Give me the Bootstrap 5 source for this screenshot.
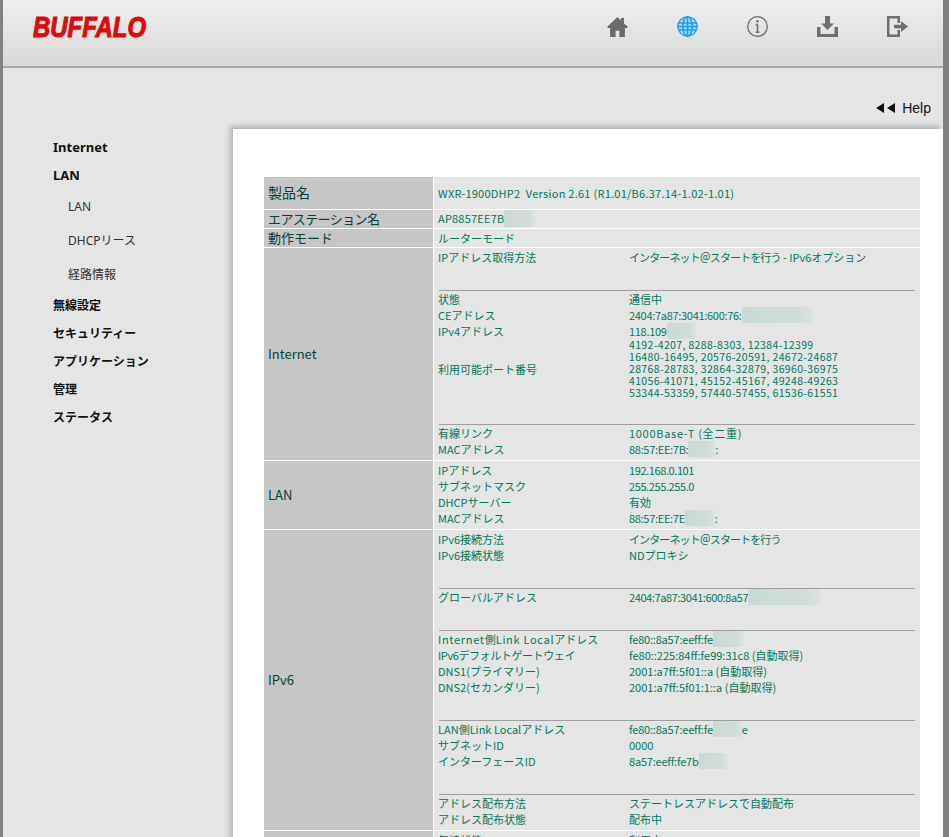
<!DOCTYPE html>
<html lang="ja"><head><meta charset="utf-8">
<link rel="stylesheet" href="https://cdn.jsdelivr.net/npm/bootstrap@5.3.0/dist/css/bootstrap.min.css">
<style>
html,body{height:837px;overflow:hidden;background:#e5e5e5}
body{font-family:"Noto Sans","Noto Sans CJK JP",sans-serif}
.shell{height:837px;overflow:hidden;border-left:3px solid #808080;border-right:6px solid #808080;background:#e5e5e5}
.topbar{height:68px;background:linear-gradient(#eeeeee,#d9d9d9);border-bottom:2px solid #a9a9a9;padding-left:30px}
.topicons{width:301px;margin-right:35px;margin-top:16px;align-self:flex-start}
.topicons svg{display:block;width:21px;height:21px}
.logo-svg{display:block;width:118px;height:30px;margin-top:11px}
.logo-svg text{font-family:"Liberation Sans",sans-serif;font-weight:700;font-style:italic;font-size:29px;fill:#de0a0a;stroke:#de0a0a;stroke-width:1.1px}
.helpbar{height:61px;padding:31px 12px 0 0;font:14px/18px "Liberation Sans",sans-serif;color:#111}
.helpbar svg{width:20px;height:10px;margin-right:6px}
.sidenav{width:230px;padding-top:5px;flex:none}
.sideitem{display:block;height:28px;line-height:26px;padding-left:50px;font-size:13px;font-weight:700;color:#111;text-decoration:none}
.sideitem.jp{font-size:12px}
.subitem{display:block;height:34px;line-height:34px;padding-left:65px;font-size:12px;color:#333;text-decoration:none}
.sublist{margin-bottom:1px}
.sheet{flex:1;background:#fff;padding:48px 23px 0 31px;box-shadow:-3px -3px 5px rgba(0,0,0,.22);min-height:760px}
.spec{width:656px;table-layout:fixed;border-collapse:separate;border-spacing:0;font-family:"Noto Sans CJK JP","Noto Sans",sans-serif}
.spec th,.spec td{padding:0;border-bottom:1px solid #fff}
.spec th{width:170px;background:#c6c6c6;border-right:1px solid #fff;font-weight:400;color:#07403a;font-size:13px;padding-left:4px;vertical-align:middle;line-height:16px}
.spec td{background:#e5e5e5;color:#00785c;font-size:11px;vertical-align:top;padding-left:4px;line-height:16px}
.spec .big{font-size:14px;padding-bottom:3px}
.h32{height:33px}.h18{height:19px}.hlast{height:90px}
.spec .ctr{vertical-align:middle;padding-bottom:1px}
.kv{display:flex;height:16px;line-height:16px;white-space:nowrap}
.kk{width:191px;flex:none}
.kv.ports{height:60px;align-items:center}
.plist{line-height:12.2px;font-size:10.5px;letter-spacing:.35px}
.rule{border:0;opacity:1;height:1px;background:#a0a0a0;margin:25px 5px 0 1px}
.endgap{margin-bottom:3px}
.cellpad{padding-top:1px!important}
.mask{display:inline-block;height:16px;vertical-align:top;background:linear-gradient(90deg,#c9dad6,#d0dedb 80%,#dbe3e1)}
.w30{width:31px;height:17px}.w71{width:71px}.w29{width:29px}.w27{width:27px}.w30b{width:30px}.w72{width:72px}.w28{width:28px}
.tx-a{letter-spacing:.25px}.tx-b{letter-spacing:-.9px}.tx-c{letter-spacing:-.4px}.tx-d{letter-spacing:-.3px}.tx-e{letter-spacing:-.2px}.tx-f{letter-spacing:.7px}.tx-g{letter-spacing:-.6px}.tx-h{letter-spacing:.2px}
</style></head><body>
<div class="shell">
<header class="topbar d-flex justify-content-between">
<svg class="logo-svg" viewBox="0 0 118 30" role="img" aria-label="BUFFALO"><text x="0" y="26" textLength="113" lengthAdjust="spacingAndGlyphs">BUFFALO</text></svg>
<nav class="topicons d-flex justify-content-between">
<svg viewBox="0 0 21 21" fill="#6b6b6b"><path d="M10.5 1 0.5 10.5v1.6h2.600V21h5.500v-6.200h3.800V21h5.500v-8.900h2.600v-1.600L17 7.400V2h-3v2.600z"/></svg>
<svg viewBox="0 0 21 21" fill="none" stroke="#1e9bf2" stroke-width="1.5"><circle cx="10.5" cy="10.5" r="9.700" fill="#a8d8fa" stroke-width="1.300"/><ellipse cx="10.5" cy="10.5" rx="4.700" ry="9.700"/><path d="M10.500 1v19M1.200 7h18.600M1.200 14h18.600M1 10.500h19"/></svg>
<svg viewBox="0 0 21 21" fill="none" stroke="#6e6e6e" stroke-width="1.3"><circle cx="10.5" cy="10.5" r="9.800"/><path d="M10.500 8.500v7.500M8.600 16.200h3.800M8.800 8.600h2" stroke-width="1.6"/><circle cx="10.5" cy="5.300" r="1.200" fill="#6e6e6e" stroke="none"/></svg>
<svg viewBox="0 0 21 21" fill="#6f6f6f"><path d="M8 0h5v7.500h4l-6.500 6.500L4 7.500h4z"/><path d="M0 11h3.500v7h14v-7H21v10H0z"/></svg>
<svg viewBox="0 0 21 21" fill="#6f6f6f"><path d="M0 0h13v7h-2.500V2.500h-8v16h8V14H13v7H0z"/><path d="M7 8.800h7V5l7 5.500-7 5.500v-3.800H7z"/></svg>
</nav>
</header>
<div class="helpbar d-flex justify-content-end align-items-start">
<svg class="mt-1" viewBox="0 0 20 10" fill="#111"><path d="M8 0v10L0 5zM19 0v10l-8-5z"/></svg><span>Help</span>
</div>
<div class="d-flex">
<aside class="sidenav">
<a class="sideitem" href="#">Internet</a>
<a class="sideitem" href="#">LAN</a>
<div class="sublist">
<a class="subitem" href="#">LAN</a>
<a class="subitem" href="#">DHCPリース</a>
<a class="subitem" href="#">経路情報</a>
</div>
<a class="sideitem jp" href="#">無線設定</a>
<a class="sideitem jp" href="#">セキュリティー</a>
<a class="sideitem jp" href="#">アプリケーション</a>
<a class="sideitem jp" href="#">管理</a>
<a class="sideitem jp" href="#">ステータス</a>
</aside>
<main class="sheet">
<table class="spec"><tbody>
<tr class="h32"><th class="big">製品名</th><td class="ctr tx-a">WXR-1900DHP2&nbsp; Version 2.61 (R1.01/B6.37.14-1.02-1.01)</td></tr>
<tr class="h18"><th class="tx-g">エアステーション名</th><td class="ctr"><span class="tx-h">AP8857EE7B</span><span class="mask w30"></span></td></tr>
<tr class="h18"><th>動作モード</th><td class="ctr">ルーターモード</td></tr>
<tr><th>Internet</th><td class="cellpad">
<div class="kv"><div class="kk">IPアドレス取得方法</div><div><span class="tx-b">インターネット＠スタートを行う</span> - IPv6オプション</div></div>
<hr class="rule">
<div class="kv"><div class="kk">状態</div><div>通信中</div></div>
<div class="kv"><div class="kk">CEアドレス</div><div class="tx-d">2404:7a87:3041:600:76:<span class="mask w71"></span></div></div>
<div class="kv"><div class="kk">IPv4アドレス</div><div class="tx-d">118.109<span class="mask w29"></span></div></div>
<div class="kv ports"><div class="kk">利用可能ポート番号</div><div class="plist">4192-4207, 8288-8303, 12384-12399<br>16480-16495, 20576-20591, 24672-24687<br>28768-28783, 32864-32879, 36960-36975<br>41056-41071, 45152-45167, 49248-49263<br>53344-53359, 57440-57455, 61536-61551</div></div>
<hr class="rule">
<div class="kv"><div class="kk">有線リンク</div><div class="tx-f">1000Base-T (全二重)</div></div>
<div class="kv endgap"><div class="kk">MACアドレス</div><div class="tx-d">88:57:EE:7B:<span class="mask w27"></span>:</div></div>
</td></tr>
<tr><th>LAN</th><td class="cellpad">
<div class="kv"><div class="kk">IPアドレス</div><div class="tx-c">192.168.0.101</div></div>
<div class="kv"><div class="kk">サブネットマスク</div><div class="tx-c">255.255.255.0</div></div>
<div class="kv"><div class="kk">DHCPサーバー</div><div>有効</div></div>
<div class="kv endgap"><div class="kk">MACアドレス</div><div class="tx-d">88:57:EE:7E<span class="mask w30b"></span>:</div></div>
</td></tr>
<tr><th>IPv6</th><td class="cellpad">
<div class="kv"><div class="kk">IPv6接続方法</div><div class="tx-b">インターネット＠スタートを行う</div></div>
<div class="kv"><div class="kk">IPv6接続状態</div><div>NDプロキシ</div></div>
<hr class="rule">
<div class="kv"><div class="kk">グローバルアドレス</div><div class="tx-c">2404:7a87:3041:600:8a57<span class="mask w72"></span></div></div>
<hr class="rule">
<div class="kv"><div class="kk"><span class="tx-f">Internet</span>側<span class="tx-f">Link Local</span>アドレス</div><div class="tx-e">fe80::8a57:eeff:fe<span class="mask w30b"></span></div></div>
<div class="kv"><div class="kk tx-c">IPv6デフォルトゲートウェイ</div><div>fe80::225:84ff:fe99:31c8 (自動取得)</div></div>
<div class="kv"><div class="kk">DNS1(プライマリー)</div><div>2001:a7ff:5f01::a (自動取得)</div></div>
<div class="kv"><div class="kk">DNS2(セカンダリー)</div><div>2001:a7ff:5f01:1::a (自動取得)</div></div>
<hr class="rule">
<div class="kv"><div class="kk">LAN側Link Localアドレス</div><div class="tx-e">fe80::8a57:eeff:fe<span class="mask w29"></span>e</div></div>
<div class="kv"><div class="kk">サブネットID</div><div>0000</div></div>
<div class="kv"><div class="kk">インターフェースID</div><div class="tx-e">8a57:eeff:fe7b<span class="mask w28"></span></div></div>
<hr class="rule">
<div class="kv"><div class="kk">アドレス配布方法</div><div>ステートレスアドレスで自動配布</div></div>
<div class="kv endgap"><div class="kk">アドレス配布状態</div><div>配布中</div></div>
</td></tr>
<tr class="hlast"><th>無線</th><td class="cellpad"><div class="kv"><div class="kk">無線状態</div><div>利用中</div></div></td></tr>
</tbody></table>
</main>
</div>
</div>
<script src="https://cdn.jsdelivr.net/npm/bootstrap@5.3.0/dist/js/bootstrap.bundle.min.js"></script>
</body></html>
